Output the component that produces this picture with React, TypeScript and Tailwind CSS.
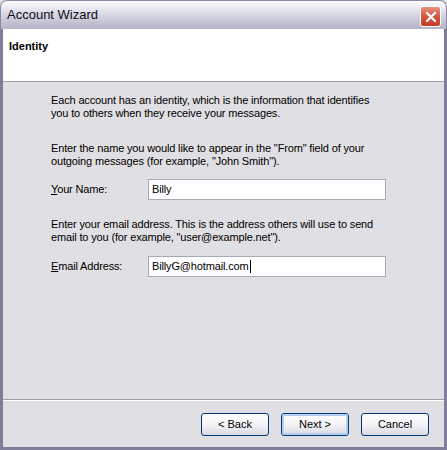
import { X } from 'lucide-react';

const font = { fontFamily: '"Liberation Sans", Arial, sans-serif' };

function WizButton({ label, isDefault }: { label: string; isDefault?: boolean }) {
  return (
    <button
      className="h-[23px] w-[68px] rounded-[3px] border border-[#003c74] bg-gradient-to-b from-white via-[#f4f4f8] to-[#d8d8e4] text-[11px] text-black"
      style={font}
    >
      <span
        className={
          isDefault
            ? 'flex h-full w-full items-center justify-center rounded-[2px] border-2 border-[#b4cdf4]'
            : 'flex h-full w-full items-center justify-center'
        }
      >
        {label}
      </span>
    </button>
  );
}

export default function App() {
  return (
    <div className="h-[450px] w-[447px] bg-[#e0dfe3]" style={font}>
      <div className="flex h-full w-full flex-col">
        {/* Title bar */}
        <div className="relative flex h-[29px] shrink-0 items-center rounded-t-[7px] border border-b-0 border-[#8c8aa6] bg-gradient-to-b from-[#fdfdff] via-[#d6d6e2] to-[#b3b2c6] pl-[6px]">
          <span className="text-[13px] text-[#0e0e1a]">Account Wizard</span>
          <div className="absolute right-[5px] top-[5px] flex h-[21px] w-[21px] items-center justify-center rounded-[3px] border border-white bg-gradient-to-b from-[#e8907f] via-[#d5553f] to-[#c13c28]">
            <X size={16} strokeWidth={3.4} className="text-white" />
          </div>
        </div>

        {/* Frame */}
        <div className="flex flex-1 flex-col border-x-[3px] border-b-[3px] border-[#7f7d9a]">
          {/* Header */}
          <div className="h-[53px] shrink-0 border-b border-[#a0a0a8] bg-white pl-[6px] pt-[11px]">
            <div className="text-[11px] font-bold leading-[13px] text-black">Identity</div>
          </div>

          {/* Body */}
          <div className="flex flex-1 flex-col pl-[48px] pt-[12px] text-[11px] leading-[13px] tracking-[-0.15px] text-black">
            <p>
              Each account has an identity, which is the information that identifies
              <br />
              you to others when they receive your messages.
            </p>

            <p className="mt-[22px]">
              Enter the name you would like to appear in the "From" field of your
              <br />
              outgoing messages (for example, "John Smith").
            </p>

            <div className="mt-[11px] flex items-center">
              <span className="w-[97px]">
                <u>Y</u>our Name:
              </span>
              <div className="flex h-[21px] w-[238px] items-center border border-[#a5acb5] bg-white px-[3px]">
                Billy
              </div>
            </div>

            <p className="mt-[18px]">
              Enter your email address. This is the address others will use to send
              <br />
              email to you (for example, "user@example.net").
            </p>

            <div className="mt-[12px] flex items-center">
              <span className="w-[97px]">
                <u>E</u>mail Address:
              </span>
              <div className="flex h-[21px] w-[238px] items-center border border-[#a5acb5] bg-white px-[3px]">
                BillyG@hotmail.com
                <span className="ml-px inline-block h-[13px] w-px bg-black" />
              </div>
            </div>
          </div>

          {/* Footer */}
          <div className="flex h-[48px] shrink-0 items-start justify-end gap-[12px] border-t border-[#9d9da1] pr-[15px] pt-[13px] shadow-[inset_0_1px_0_#ffffff]">
            <WizButton label="< Back" />
            <WizButton label="Next >" isDefault />
            <WizButton label="Cancel" />
          </div>
        </div>
      </div>
    </div>
  );
}
